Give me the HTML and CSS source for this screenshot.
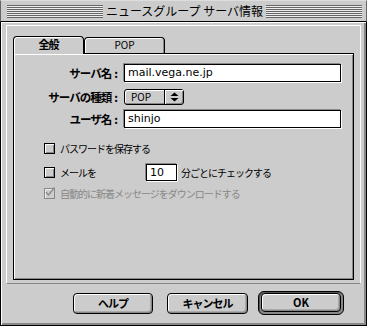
FILE: index.html
```html
<!DOCTYPE html>
<html lang="ja">
<head>
<meta charset="utf-8">
<link rel="stylesheet" href="styles.css">
</head>
<body>
<div class="window">
  <div class="titlebar">
    <span class="stripes"></span>
    <span class="title">ニュースグループ サーバ情報</span>
    <span class="stripes"></span>
  </div>
  <div class="body">
    <div class="frame">
      <div class="tabs">
        <div class="tab tab-active">全般</div>
        <div class="tab tab-other">POP</div>
      </div>
      <div class="panel">
        <div class="form">
          <div class="label">サーバ名<span class="colon">:</span></div>
          <div class="field field-wide">mail.vega.ne.jp</div>
          <div class="label label-pop">サーバの種類<span class="colon">:</span></div>
          <div class="popup-cell">
            <div class="popup">
              <span class="popup-text">POP</span>
              <span class="popup-arrows">
                <svg width="9" height="10" viewBox="0 0 9 10"><path d="M4.5 0.5 L8.5 4 L0.5 4 Z M0.5 6 L8.5 6 L4.5 9.5 Z" fill="#000"/></svg>
              </span>
            </div>
          </div>
          <div class="label label-user">ユーザ名<span class="colon">:</span></div>
          <div class="field field-wide field-user">shinjo</div>
        </div>
        <div class="checks">
          <div class="check-row">
            <span class="checkbox"></span>
            <span class="check-text">パスワードを保存する</span>
          </div>
          <div class="check-row check-row-mail">
            <span class="checkbox"></span>
            <span class="check-text mail-label">メールを</span>
            <span class="field field-small">10</span>
            <span class="check-text">分ごとにチェックする</span>
          </div>
          <div class="check-row check-row-auto">
            <span class="checkbox checkbox-disabled">
              <svg width="11" height="11" viewBox="0 0 11 11"><path d="M2 5 L4.5 8 L10.5 0.5" fill="none" stroke="#888" stroke-width="1.3"/></svg>
            </span>
            <span class="check-text disabled">自動的に新着メッセージをダウンロードする</span>
          </div>
        </div>
      </div>
    </div>
    <div class="buttons">
      <div class="button btn-help">ヘルプ</div>
      <div class="button btn-cancel">キャンセル</div>
      <div class="default-ring"><div class="button btn-ok">OK</div></div>
    </div>
  </div>
</div>
</body>
</html>
```
FILE: styles.css
```css
* { box-sizing: border-box; }
body {
  margin: 0;
  background: #ccc;
  font-family: "Noto Sans CJK JP", sans-serif;
  font-size: 12px;
  color: #000;
}
.window {
  width: 367px;
  height: 326px;
  display: flex;
  flex-direction: column;
  background: #ccc;
}
.titlebar {
  height: 22px;
  flex: none;
  display: flex;
  align-items: center;
  gap: 3px;
  padding: 0 4px 0 6px;
  border-left: 1px solid #666;
  border-right: 1px solid #666;
  border-top: 1px solid #ddd;
  border-bottom: 1px solid #000;
  background: #ccc;
}
.stripes {
  flex: 1;
  height: 13px;
  background: repeating-linear-gradient(to bottom, #666 0 1px, #eee 1px 2px);
}
.title {
  white-space: nowrap;
  line-height: 14px;
  font-size: 12px;
}
.body {
  flex: 1;
  border: 1px solid #000;
  border-top: 0;
  box-shadow: inset 1px 1px #fff, inset -2px -2px #888;
  padding: 3px 5px 0 5px;
}
.frame {
  width: 355px;
  border-left: 1px solid #fff;
  border-top: 1px solid #fff;
  border-right: 1px solid #fff;
  border-bottom: 1px solid #888;
  padding: 10px 6px 3px 6px;
}
.tabs {
  display: flex;
  align-items: flex-end;
  height: 17px;
}
.tab {
  border: 1px solid #000;
  border-bottom: 0;
  border-radius: 4px 4px 0 0;
  background: #ccc;
  box-shadow: inset 1px 1px #fff, inset -1px 0 #888;
  text-align: center;
  font-size: 10px;
  line-height: 15px;
}
.tab-active {
  width: 71px;
  height: 18px;
  margin-bottom: -1px;
  position: relative;
  z-index: 1;
  font-weight: bold;
  font-size: 11px;
  letter-spacing: -1px;
  box-shadow: inset 1px 1px #fff;
}
.tab-other {
  width: 81px;
  height: 16px;
  line-height: 14px;
}
.panel {
  height: 227px;
  border: 1px solid #000;
  box-shadow: inset 1px 1px #fff, inset -1px -1px #888;
  padding: 10px 12px 0 0;
}
.form {
  display: grid;
  grid-template-columns: 106px 217px;
  column-gap: 4px;
  align-items: center;
}
.label {
  text-align: right;
  font-weight: bold;
  font-size: 11.5px;
  letter-spacing: -1px;
  white-space: nowrap;
  height: 18px;
  line-height: 18px;
  padding-right: 2px;
}
.colon {
  letter-spacing: 0;
  margin-left: 3px;
}
.label-pop { margin-top: 7px; height: 16px; line-height: 16px; }
.label-user { margin-top: 5px; }
.field {
  background: #fff;
  border: 1px solid #000;
  box-shadow: -1px -1px #888, 1px 1px #fff;
  font-family: "DejaVu Sans", sans-serif;
  font-size: 11px;
  height: 18px;
  line-height: 16px;
  padding-left: 3px;
  white-space: nowrap;
}
.field-user { margin-top: 5px; }
.popup-cell { margin-top: 7px; height: 16px; }
.popup {
  width: 60px;
  height: 16px;
  border: 1px solid #000;
  border-radius: 3px;
  background: #ccc;
  box-shadow: inset 1px 1px #fff, inset -1px -1px #888;
  display: flex;
}
.popup-text {
  width: 39px;
  padding-left: 6px;
  font-size: 10px;
  line-height: 14px;
}
.popup-arrows {
  flex: 1;
  border-left: 1px solid #000;
  box-shadow: inset 1px 1px #fff;
  display: flex;
  align-items: center;
  justify-content: center;
}
.checks {
  padding-left: 30px;
  margin-top: 14px;
  display: flex;
  flex-direction: column;
}
.check-row {
  display: flex;
  align-items: center;
  height: 13px;
  white-space: nowrap;
}
.check-row-mail { margin-top: 9px; height: 17px; }
.check-row-auto { margin-top: 6px; }
.checkbox {
  width: 11px;
  height: 11px;
  flex: none;
  border: 1px solid #000;
  background: #ccc;
  box-shadow: inset 1px 1px #fff, inset -1px -1px #888;
  margin-right: 5px;
  position: relative;
}
.checkbox-disabled {
  border-color: #888;
  box-shadow: inset 1px 1px #eee;
}
.checkbox-disabled svg {
  position: absolute;
  left: -1px;
  top: -2px;
}
.check-text { line-height: 13px; font-size: 10px; letter-spacing: -1px; }
.mail-label { width: 86px; }
.field-small {
  width: 31px;
  height: 17px;
  line-height: 15px;
  font-size: 11px;
  letter-spacing: 0;
  margin-right: 4px;
}
.disabled { color: #888; }
.buttons {
  display: flex;
  justify-content: flex-end;
  align-items: center;
  padding-right: 17px;
  margin-top: 7px;
  height: 24px;
}
.button {
  height: 21px;
  border: 1px solid #000;
  border-radius: 4px;
  background: #ccc;
  box-shadow: inset 1px 1px #fff, inset -1px -1px #888, inset -2px -2px #aaa;
  font-weight: bold;
  font-size: 11px;
  letter-spacing: -1px;
  text-align: center;
  line-height: 19px;
}
.btn-help { width: 80px; margin-right: 14px; }
.btn-cancel { width: 81px; margin-right: 10px; }
.default-ring {
  width: 86px;
  height: 24px;
  border: 1px solid #000;
  border-radius: 6px;
  padding: 1px 2px 2px 2px;
  background: #888;
  box-shadow: inset 1px 1px #555;
}
.btn-ok { width: 80px; height: 19px; line-height: 17px; letter-spacing: 0; }
```
